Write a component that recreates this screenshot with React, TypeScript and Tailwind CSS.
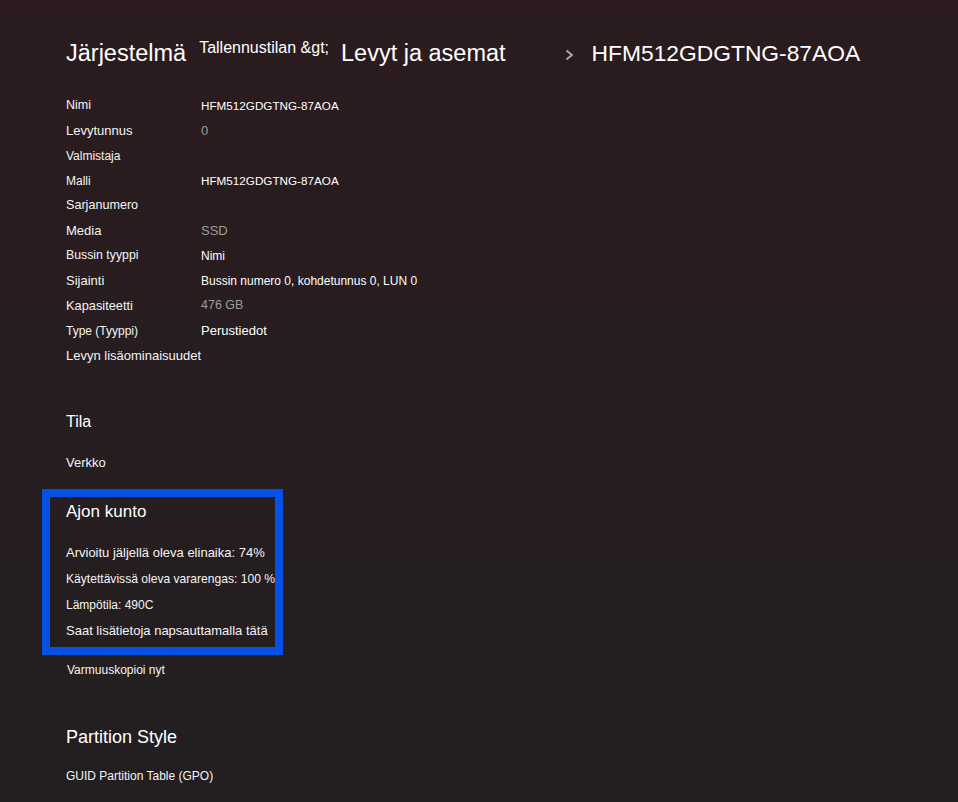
const rows: { label: string; labelSize: string; value?: string; valueSize?: string; muted?: boolean }[] = [
  { label: "Nimi", labelSize: "text-[12.5px]", value: "HFM512GDGTNG-87AOA", valueSize: "text-[11.7px]" },
  { label: "Levytunnus", labelSize: "text-[13px]", value: "0", valueSize: "text-[13px]", muted: true },
  { label: "Valmistaja", labelSize: "text-[12px]" },
  { label: "Malli", labelSize: "text-[12px]", value: "HFM512GDGTNG-87AOA", valueSize: "text-[11.7px]" },
  { label: "Sarjanumero", labelSize: "text-[12.6px]" },
  { label: "Media", labelSize: "text-[13px]", value: "SSD", valueSize: "text-[13px]", muted: true },
  { label: "Bussin tyyppi", labelSize: "text-[12.3px]", value: "Nimi", valueSize: "text-[12px]" },
  { label: "Sijainti", labelSize: "text-[13px]", value: "Bussin numero 0, kohdetunnus 0, LUN 0", valueSize: "text-[12px]" },
  { label: "Kapasiteetti", labelSize: "text-[12.8px]", value: "476 GB", valueSize: "text-[12.5px]", muted: true },
  { label: "Type (Tyyppi)", labelSize: "text-[12px]", value: "Perustiedot", valueSize: "text-[13px]" },
  { label: "Levyn lisäominaisuudet", labelSize: "text-[13px]" },
];

const health = [
  { text: "Arvioitu jäljellä oleva elinaika: 74%", size: "text-[13px]" },
  { text: "Käytettävissä oleva vararengas: 100 %", size: "text-[12.1px]" },
  { text: "Lämpötila: 490C", size: "text-[12px]" },
  { text: "Saat lisätietoja napsauttamalla tätä", size: "text-[13px]" },
];

function Chevron() {
  return (
    <svg width="9" height="12" viewBox="0 0 9 12" fill="none" className="mt-[10px] ml-[59px]">
      <path d="M2 2 L7 6 L2 10" stroke="#a9a9a9" strokeWidth="2" strokeLinecap="round" strokeLinejoin="round" />
    </svg>
  );
}

export default function App() {
  return (
    <div
      className="h-[802px] w-full overflow-hidden bg-linear-to-b from-[#2b1b1e] to-[#221f21] text-[#f4f4f4] pl-[66px] pt-[39px]"
      style={{ fontFamily: '"Liberation Sans", Arial, sans-serif' }}
    >
      {/* breadcrumb */}
      <div className="flex items-start whitespace-nowrap">
        <span className="text-[23.5px] leading-[28px] text-white">Järjestelmä</span>
        <span className="ml-[13px] -mt-[1px] text-[16px] leading-[20px] text-white">Tallennustilan &amp;gt;</span>
        <span className="ml-[12px] text-[23.5px] leading-[28px] text-white">Levyt ja asemat</span>
        <Chevron />
        <span className="ml-[18px] text-[22.8px] leading-[28px] text-white">HFM512GDGTNG-87AOA</span>
      </div>

      {/* properties */}
      <div className="mt-[26px] flex flex-col">
        {rows.map((r) => (
          <div key={r.label} className="flex h-[25px] items-center whitespace-nowrap">
            <span className={`w-[135px] shrink-0 ${r.labelSize}`}>{r.label}</span>
            {r.value && (
              <span className={`${r.valueSize} ${r.muted ? "text-[#9d9d9d]" : "text-white"}`}>{r.value}</span>
            )}
          </div>
        ))}
      </div>

      <div className="mt-[42px] text-[16px] leading-[24px] text-white">Tila</div>
      <div className="mt-[19px] text-[13px] leading-[20px]">Verkko</div>

      {/* drive health */}
      <div className="mt-[16px] -ml-[24px] box-border h-[166px] w-[241px] border-8 border-[#0550e5] pl-[16px] pt-[3px]">
        <div className="text-[17px] leading-[24px] text-white">Ajon kunto</div>
        <div className="mt-[16px] flex flex-col">
          {health.map((h) => (
            <div key={h.text} className={`flex h-[26px] items-center whitespace-nowrap ${h.size}`}>
              {h.text}
            </div>
          ))}
        </div>
      </div>

      <div className="mt-[5px] ml-[1px] text-[12px] leading-[20px]">Varmuuskopioi nyt</div>

      <div className="mt-[45px] text-[18px] leading-[24px] text-white">Partition Style</div>
      <div className="mt-[17px] text-[12px] leading-[20px]">GUID Partition Table (GPO)</div>
    </div>
  );
}
